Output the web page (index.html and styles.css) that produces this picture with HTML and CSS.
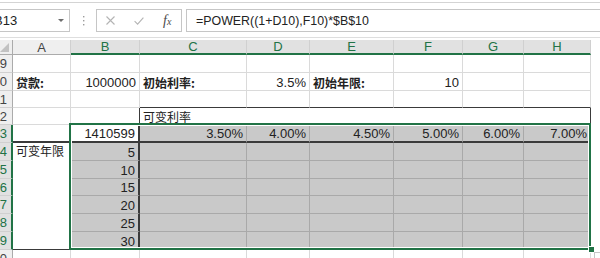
FILE: index.html
```html
<!DOCTYPE html>
<html lang="zh-CN">
<head>
    <meta charset="UTF-8">
    <title>可变利率 - 模拟运算表</title>
    <link rel="stylesheet" href="styles.css">
</head>
<body>
    <div class="topbar"></div>

    <div class="formula-bar">
        <div class="name-box">B13<span class="name-arrow"></span></div>
        <div class="grip">
            <svg width="3" height="12" viewBox="0 0 3 12"><rect x="1" y="1" width="1.4" height="1.4"/><rect x="1" y="5" width="1.4" height="1.4"/><rect x="1" y="9" width="1.4" height="1.4"/></svg>
        </div>
        <div class="fx-box">
            <svg class="fx-cancel" width="9" height="9" viewBox="0 0 9 9"><path d="M0.5 0.5 L8.5 8.5 M8.5 0.5 L0.5 8.5"/></svg>
            <svg class="fx-enter" width="10" height="8" viewBox="0 0 10 8"><path d="M0.6 4.2 L3.6 7.2 L9.4 0.6"/></svg>
            <span class="fx-label">f<span class="fx-x">x</span></span>
        </div>
        <div class="formula-input">=POWER((1+D10),F10)*$B$10</div>
    </div>
    <div class="bar-rule"></div>

    <div class="sheet">
        <!-- column headers -->
        <div class="c corner"><span class="corner-tri"></span></div>
        <div class="c ch">A</div>
        <div class="c ch sel">B</div>
        <div class="c ch sel">C</div>
        <div class="c ch sel">D</div>
        <div class="c ch sel">E</div>
        <div class="c ch sel">F</div>
        <div class="c ch sel">G</div>
        <div class="c ch sel">H</div>

        <!-- row 9 -->
        <div class="c rh">9</div>
        <div class="c"></div><div class="c"></div><div class="c"></div><div class="c"></div>
        <div class="c"></div><div class="c"></div><div class="c"></div><div class="c"></div>

        <!-- row 10 -->
        <div class="c rh">10</div>
        <div class="c b"><span class="zh">贷款:</span></div>
        <div class="c num">1000000</div>
        <div class="c b"><span class="zh">初始利率:</span></div>
        <div class="c num">3.5%</div>
        <div class="c b"><span class="zh">初始年限:</span></div>
        <div class="c num">10</div>
        <div class="c"></div>
        <div class="c"></div>

        <!-- row 11 -->
        <div class="c rh">11</div>
        <div class="c"></div><div class="c"></div>
        <div class="c dk-b"></div><div class="c dk-b"></div><div class="c dk-b"></div>
        <div class="c dk-b"></div><div class="c dk-b"></div><div class="c dk-b"></div>

        <!-- row 12 -->
        <div class="c rh">12</div>
        <div class="c"></div>
        <div class="c dk-r"></div>
        <div class="c merged-rate"><span class="zh">可变利率</span></div>

        <!-- row 13 -->
        <div class="c rh sel">13</div>
        <div class="c dk-b2"></div>
        <div class="c num dk-b2 dk-r2">1410599</div>
        <div class="c num shade dk-b2">3.50%</div>
        <div class="c num shade dk-b2">4.00%</div>
        <div class="c num shade dk-b2">4.50%</div>
        <div class="c num shade dk-b2">5.00%</div>
        <div class="c num shade dk-b2">6.00%</div>
        <div class="c num shade dk-b2">7.00%</div>

        <!-- rows 14-19 -->
        <div class="c rh sel">14</div>
        <div class="c merged-term"><span class="zh">可变年限</span></div>
        <div class="c num shade dk-r2">5</div>
        <div class="c shade"></div><div class="c shade"></div><div class="c shade"></div>
        <div class="c shade"></div><div class="c shade"></div><div class="c shade"></div>

        <div class="c rh sel">15</div>
        <div class="c num shade dk-r2">10</div>
        <div class="c shade"></div><div class="c shade"></div><div class="c shade"></div>
        <div class="c shade"></div><div class="c shade"></div><div class="c shade"></div>

        <div class="c rh sel">16</div>
        <div class="c num shade dk-r2">15</div>
        <div class="c shade"></div><div class="c shade"></div><div class="c shade"></div>
        <div class="c shade"></div><div class="c shade"></div><div class="c shade"></div>

        <div class="c rh sel">17</div>
        <div class="c num shade dk-r2">20</div>
        <div class="c shade"></div><div class="c shade"></div><div class="c shade"></div>
        <div class="c shade"></div><div class="c shade"></div><div class="c shade"></div>

        <div class="c rh sel">18</div>
        <div class="c num shade dk-r2">25</div>
        <div class="c shade"></div><div class="c shade"></div><div class="c shade"></div>
        <div class="c shade"></div><div class="c shade"></div><div class="c shade"></div>

        <div class="c rh sel">19</div>
        <div class="c num shade dk-r2">30</div>
        <div class="c shade"></div><div class="c shade"></div><div class="c shade"></div>
        <div class="c shade"></div><div class="c shade"></div><div class="c shade"></div>

        <!-- row 20 -->
        <div class="c rh">20</div>
        <div class="c"></div><div class="c"></div><div class="c"></div><div class="c"></div>
        <div class="c"></div><div class="c"></div><div class="c"></div><div class="c"></div>

        <!-- selection B13:H19 -->
        <div class="selection"></div>
        <div class="fill-handle"></div>
        <div class="quick-analysis"></div>
    </div>
</body>
</html>
```

FILE: styles.css
```css
body {
    margin: 0;
    width: 600px;
    height: 258px;
    overflow: hidden;
    background: #fff;
    font-family: "Liberation Sans", "Noto Sans CJK SC", sans-serif;
    font-size: 13px;
    color: #222;
}

/* formula bar */
.topbar {
    height: 2px;
    border-bottom: 1px solid #d4d4d4;
}
.formula-bar {
    display: flex;
    height: 23px;
    margin-top: 6px;
}
.name-box {
    position: relative;
    flex: none;
    width: 80px;
    margin-left: -10px;
    padding-left: 3px;
    box-sizing: border-box;
    border: 1px solid #c6c6c6;
    display: flex;
    align-items: center;
    color: #222;
}
.name-arrow {
    position: absolute;
    right: 5px;
    top: 9px;
    border-left: 3px solid transparent;
    border-right: 3px solid transparent;
    border-top: 3px solid #6d6d6d;
}
.grip {
    flex: none;
    width: 26px;
    display: flex;
    align-items: center;
    justify-content: center;
}
.grip svg { fill: #9c9c9c; }
.fx-box {
    flex: none;
    width: 86px;
    box-sizing: border-box;
    border: 1px solid #c6c6c6;
    display: flex;
    align-items: center;
}
.fx-box svg path {
    fill: none;
    stroke: #b4b4b4;
    stroke-width: 1.1;
}
.fx-cancel { margin-left: 9px; }
.fx-enter { margin-left: 19px; }
.fx-label {
    margin-left: 19px;
    font-family: "Liberation Serif", serif;
    font-style: italic;
    font-size: 14px;
    color: #4a4a4a;
}
.fx-x {
    font-size: 10px;
}
.formula-input {
    flex: none;
    width: 430px;
    margin-left: 4px;
    padding-left: 9px;
    box-sizing: border-box;
    border: 1px solid #c6c6c6;
    display: flex;
    align-items: center;
    font-size: 12.4px;
    color: #222;
}
.bar-rule {
    margin-top: 5px;
    border-top: 1px solid #dedede;
}

/* sheet grid */
.sheet {
    position: relative;
    margin-top: 2px;
    display: grid;
    grid-template-columns: 13px 58px 69px 107px 63px 84px 69px 61px 67px;
    grid-template-rows: 15px 18px 18px 17px 17px 18px 18px 18px 17px 18px 18px 18px 18px;
}
.c {
    box-sizing: border-box;
    min-width: 0;
    overflow: hidden;
    white-space: nowrap;
    display: flex;
    align-items: flex-end;
    padding: 0 3px;
    line-height: 15px;
    border-right: 1px solid #dadada;
    border-bottom: 1px solid #dadada;
}
.num { justify-content: flex-end; }
.b { font-weight: bold; }
.zh {
    font-family: "Noto Sans CJK SC", sans-serif;
    font-size: 12px;
}

.corner {
    position: relative;
    background: #efefef;
    border-right: 1px solid #ababab;
    border-bottom: 1px solid #ababab;
}
.corner-tri {
    position: absolute;
    right: 3px;
    bottom: 2px;
    border-left: 9px solid transparent;
    border-bottom: 9px solid #c2c2c2;
}
.ch {
    justify-content: center;
    align-items: center;
    background: #efefef;
    color: #444;
    border-right: 1px solid #d0d0d0;
    border-bottom: 1px solid #ababab;
}
.ch.sel {
    background: #e1e1e1;
    color: #217346;
    border-bottom: 2px solid #217346;
}
.rh {
    justify-content: flex-end;
    align-items: center;
    padding: 0 5px 0 0;
    background: #efefef;
    color: #444;
    border-right: 1px solid #ababab;
    border-bottom: 1px solid #d0d0d0;
}
.rh.sel {
    padding-right: 4px;
    background: #e1e1e1;
    color: #217346;
    border-right: 2px solid #217346;
}

.shade {
    background: #c9c9c9;
    border-right-color: #a9a9a9;
    border-bottom-color: #a9a9a9;
}
.dk-b { border-bottom-color: #3a3a3a; }
.dk-b2 { border-bottom: 2px solid #3a3a3a; }
.dk-r { border-right-color: #3a3a3a; }
.dk-r2 { border-right: 2px solid #3a3a3a; }

.merged-rate {
    grid-column: span 6;
    border-right-color: #3a3a3a;
    border-bottom-color: #3a3a3a;
}
.merged-term {
    grid-row: span 6;
    align-items: flex-start;
    border-right-color: #3a3a3a;
    border-bottom-color: #3a3a3a;
}

/* selection overlay */
.selection {
    position: absolute;
    left: 69px;
    top: 83px;
    width: 522px;
    height: 127px;
    box-sizing: border-box;
    border: 2px solid #217346;
    box-shadow: inset 0 0 0 1px #fff;
    pointer-events: none;
}
.fill-handle {
    position: absolute;
    left: 588px;
    top: 206px;
    width: 7px;
    height: 7px;
    box-sizing: border-box;
    background: #217346;
    border: 1px solid #fff;
}
.quick-analysis {
    position: absolute;
    left: 594px;
    top: 212px;
    width: 14px;
    height: 14px;
    box-sizing: border-box;
    border: 1px solid #c6c6c6;
    background: linear-gradient(135deg, #fff 45%, #e8a33d 45%, #e8a33d 60%, #fff 60%);
}
```
